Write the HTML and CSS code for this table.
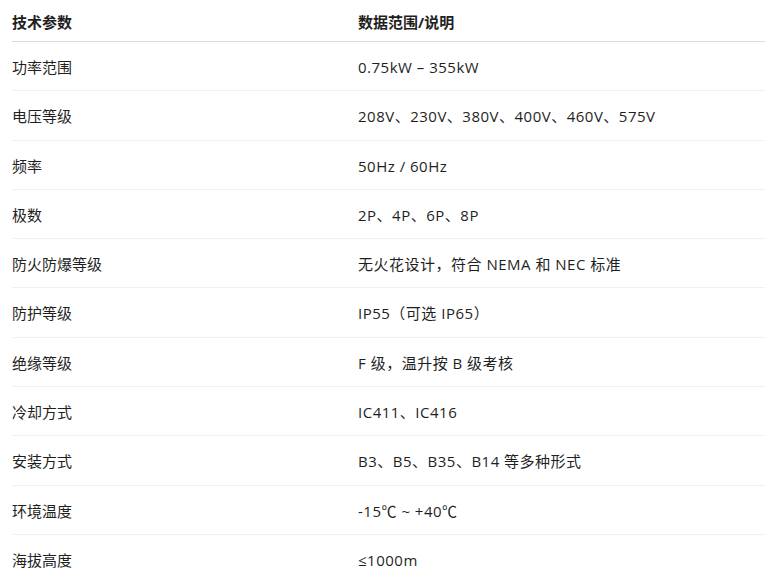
FILE: index.html
```html
<!DOCTYPE html>
<html lang="zh-CN">
<head>
<meta charset="utf-8">
<link rel="stylesheet" href="styles.css">
</head>
<body>
<table class="spec">
  <thead>
    <tr><th class="c1">技术参数</th><th>数据范围/说明</th></tr>
  </thead>
  <tbody>
    <tr><td class="c1">功率范围</td><td class="c2">0.75kW – 355kW</td></tr>
    <tr><td class="c1">电压等级</td><td class="c2">208V、230V、380V、400V、460V、575V</td></tr>
    <tr><td class="c1">频率</td><td class="c2">50Hz / 60Hz</td></tr>
    <tr><td class="c1">极数</td><td class="c2">2P、4P、6P、8P</td></tr>
    <tr><td class="c1">防火防爆等级</td><td class="c2">无火花设计，符合 NEMA 和 NEC 标准</td></tr>
    <tr><td class="c1">防护等级</td><td class="c2">IP55（可选 IP65）</td></tr>
    <tr><td class="c1">绝缘等级</td><td class="c2">F 级，温升按 B 级考核</td></tr>
    <tr><td class="c1">冷却方式</td><td class="c2">IC411、IC416</td></tr>
    <tr><td class="c1">安装方式</td><td class="c2">B3、B5、B35、B14 等多种形式</td></tr>
    <tr><td class="c1">环境温度</td><td class="c2">-15℃ ~ +40℃</td></tr>
    <tr><td class="c1">海拔高度</td><td class="c2">≤1000m</td></tr>
  </tbody>
</table>
</body>
</html>
```
FILE: styles.css
```css
html, body {
  margin: 0;
  padding: 0;
  background: #ffffff;
}
body {
  font-family: "Open Sans", "Noto Sans CJK SC", sans-serif;
  font-size: 15px;
  color: #1f1f1f;
  padding-left: 12px;
}
.spec {
  border-collapse: collapse;
  width: 753px;
  text-align: left;
}
.spec th, .spec td {
  padding: 0;
  line-height: 22px;
  vertical-align: middle;
}
.spec th {
  font-weight: 700;
  padding-top: 11px;
  padding-bottom: 8px;
  border-bottom: 1px solid #dcdcdc;
}
.spec td {
  padding-top: 14px;
  padding-bottom: 12.3px;
  border-bottom: 1px solid #efefef;
}
.spec tbody tr:last-child td {
  border-bottom: none;
}
.spec .c1 {
  width: 346px;
}
.spec .c2 {
  letter-spacing: 0.5px;
}
```
